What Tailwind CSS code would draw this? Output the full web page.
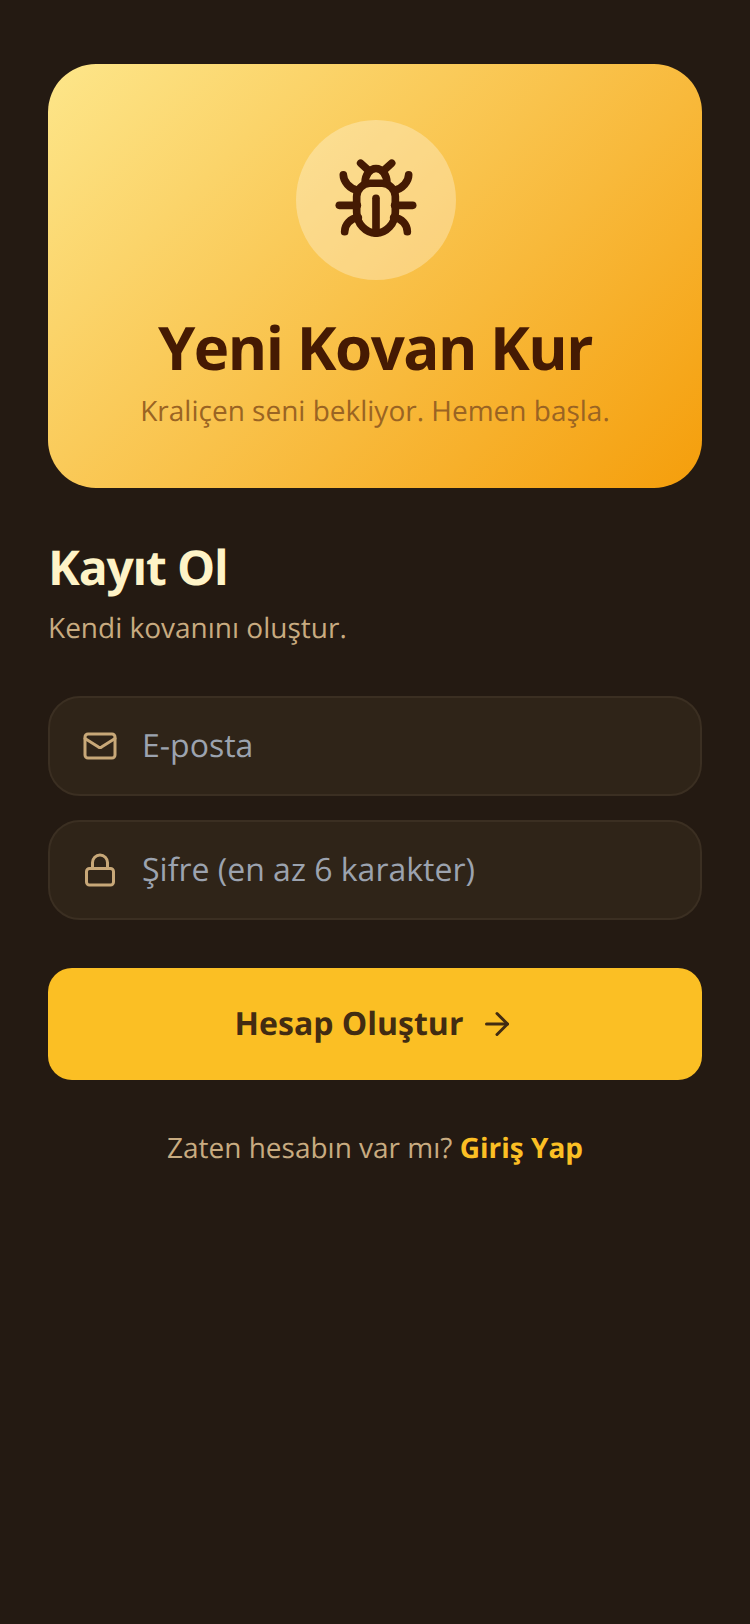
<!DOCTYPE html>
<html lang="tr">
<head>
<meta charset="utf-8">
<script src="https://cdn.jsdelivr.net/npm/@tailwindcss/browser@4"></script>
</head>
<body class="m-0 bg-[#241a12]">
<div class="w-[750px] h-[1624px] bg-[#241a12] px-12 pt-16 font-['Open_Sans',sans-serif] [text-rendering:geometricPrecision] flex flex-col">
  <div class="h-[424px] rounded-[48px] bg-[linear-gradient(135deg,#fde68a_0%,#f59e0b_100%)] flex flex-col items-center pt-14">
    <div class="w-40 h-40 ml-[2px] rounded-full bg-white/30 flex items-center justify-center shrink-0">
      <svg width="92" height="92" viewBox="0 6 276 276" fill="none" stroke="#451a03" stroke-width="23" stroke-linecap="round" stroke-linejoin="round"><path d="M92 33.6 117 56.8"/><path d="M185 33.6 160 56.8"/><path d="M105 93.7C105 68.4 120 49.4 138 49.4C156 49.4 171 68.4 171 93.7"/><path d="M138 243.5C107 243.5 80 215 80 180V133.8C80 111.6 99 93.7 120 93.7H156C177 93.7 196 111.6 196 133.8V180C196 215 169 243.5 138 243.5Z"/><path d="M138 139V243.5"/><path d="M40 68.4C40 88.4 58 109.5 82 114.8"/><path d="M236 68.4C236 88.4 218 109.5 194 114.8"/><path d="M28 160H82"/><path d="M248 160H194"/><path d="M44 239C44 218 60 199 85 197"/><path d="M232 239C232 218 216 199 191 197"/></svg>
    </div>
    <h1 class="mt-[30px] text-[60px] leading-[75px] font-bold tracking-[-1.5px] text-[#451a03]">Yeni Kovan Kur</h1>
    <p class="mt-[5px] text-[28px] leading-[42px] text-[#9a6423]">Kraliçen seni bekliyor. Hemen başla.</p>
  </div>
  <h2 class="mt-[50px] text-[48px] leading-[60px] font-bold tracking-[-1.2px] text-[#fef3c7]">Kayıt Ol</h2>
  <p class="mt-[9px] text-[28px] leading-[42px] text-[#c8ab80]">Kendi kovanını oluştur.</p>
  <div class="mt-[47px] flex flex-col gap-6">
    <div class="h-[100px] rounded-[32px] bg-[#2f2418] border-2 border-[#3b2f22] flex items-center pl-[32px] gap-6">
      <svg width="36" height="36" viewBox="0 0 24 24" fill="none" stroke="#c8a878" stroke-width="2" stroke-linecap="round" stroke-linejoin="round"><path d="m22 7-8.991 5.727a2 2 0 0 1-2.009 0L2 7"/><rect x="2" y="4" width="20" height="16" rx="2"/></svg>
      <span class="text-[32px] leading-[48px] text-[#9ca3af]">E-posta</span>
    </div>
    <div class="h-[100px] rounded-[32px] bg-[#2f2418] border-2 border-[#3b2f22] flex items-center pl-[32px] gap-6">
      <svg width="36" height="36" viewBox="0 0 24 24" fill="none" stroke="#c8a878" stroke-width="2" stroke-linecap="round" stroke-linejoin="round"><rect x="3" y="11" width="18" height="11" rx="2" ry="2"/><path d="M7 11V7a5 5 0 0 1 10 0v4"/></svg>
      <span class="text-[32px] leading-[48px] text-[#9ca3af]">Şifre (en az 6 karakter)</span>
    </div>
  </div>
  <div class="mt-12 h-[112px] rounded-3xl bg-[#fbbf24] flex items-center justify-center gap-4">
    <span class="text-[32px] leading-[48px] font-bold text-[#422c12]">Hesap Oluştur</span>
    <svg width="36" height="36" viewBox="0 0 24 24" fill="none" stroke="#422c12" stroke-width="2" stroke-linecap="round" stroke-linejoin="round"><path d="M5 12h14"/><path d="m12 5 7 7-7 7"/></svg>
  </div>
  <p class="mt-[47px] text-center text-[28px] leading-[42px] text-[#c8ab80]">Zaten hesabın var mı? <span class="font-bold text-[#fbbf24]">Giriş Yap</span></p>
</div>
</body>
</html>
